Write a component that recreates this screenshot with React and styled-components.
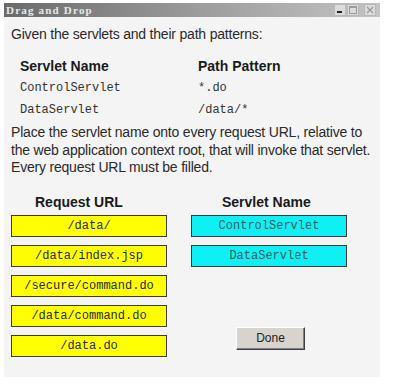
import React from "react";
import styled, { createGlobalStyle } from "styled-components";

const GlobalStyle = createGlobalStyle`
  body {
    margin: 0;
    background: #ffffff;
    font-family: "Liberation Sans", Arial, sans-serif;
  }
`;

const Window = styled.div`
  margin: 3px 0 0 4px;
  width: 376px;
  height: 374px;
  background: #f4f4f4;
  display: flex;
  flex-direction: column;
`;

const TitleBar = styled.div`
  height: 14px;
  display: flex;
  align-items: center;
  justify-content: space-between;
  padding: 0 4px 0 2px;
  background: linear-gradient(to right, #6a6a6a, #9a9a9a 50%, #c4c4c4);
`;

const Title = styled.span`
  font-family: "Liberation Serif", "Times New Roman", serif;
  font-weight: bold;
  font-size: 11px;
  letter-spacing: 1.2px;
  color: #e8e8e8;
`;

const Controls = styled.div`
  display: flex;
  gap: 1px;
`;

const Ctrl = styled.div`
  width: 10px;
  height: 10px;
  margin-left: ${(p) => (p.$gap ? "4px" : "0")};
  background: #dcdcdc;
  border: 1px solid #b8b8b8;
  display: flex;
  align-items: center;
  justify-content: center;
`;

const Body = styled.div`
  padding: 9px 0 0 7px;
  display: flex;
  flex-direction: column;
`;

const Text = styled.p`
  margin: 0;
  font-size: 14px;
  line-height: ${(p) => p.$lh || "17px"};
  color: #2a2a2a;
  letter-spacing: -0.2px;
`;

const Table = styled.div`
  margin: 12px 0 0 9px;
  display: grid;
  grid-template-columns: 178px 1fr;
  grid-auto-rows: 22px;
  align-items: center;
`;

const Th = styled.div`
  font-weight: bold;
  font-size: 14px;
  color: #1a1a1a;
`;

const Td = styled.div`
  font-family: "Liberation Mono", "Courier New", monospace;
  font-size: 12px;
  color: #333;
`;

const Para = styled.div`
  margin-top: 3px;
`;

const Columns = styled.div`
  margin: 17px 0 0 0;
  display: flex;
  gap: 24px;
`;

const Column = styled.div`
  width: 156px;
  display: flex;
  flex-direction: column;
  gap: 8px;
`;

const ColHead = styled.div`
  font-weight: bold;
  font-size: 14px;
  line-height: 17px;
  color: #1a1a1a;
  padding-left: ${(p) => p.$indent}px;
  margin-bottom: -4px;
`;

const Slot = styled.div`
  height: 20px;
  border: 1px solid #3c3c3c;
  background: ${(p) => (p.$cyan ? "#0ff0f4" : "#ffff00")};
  color: ${(p) => (p.$cyan ? "#2f5f63" : "#2a2a2a")};
  font-family: "Liberation Mono", "Courier New", monospace;
  font-size: 12px;
  display: flex;
  align-items: center;
  justify-content: center;
`;

const Done = styled.button`
  margin: 52px 0 0 45px;
  width: 69px;
  height: 23px;
  background: #d6d4cc;
  border: 1px solid;
  border-color: #ffffff #404040 #404040 #ffffff;
  box-shadow: inset -1px -1px 0 #808080;
  font-family: "Liberation Sans", Arial, sans-serif;
  font-size: 12px;
  color: #222;
  padding: 0;
`;

const urls = ["/data/", "/data/index.jsp", "/secure/command.do", "/data/command.do", "/data.do"];
const servlets = ["ControlServlet", "DataServlet"];

export default function App() {
  return (
    <>
      <GlobalStyle />
      <Window>
        <TitleBar>
          <Title>Drag and Drop</Title>
          <Controls>
            <Ctrl>
              <svg width="8" height="8" viewBox="0 0 8 8">
                <rect x="1" y="5" width="5" height="2" fill="#222" />
              </svg>
            </Ctrl>
            <Ctrl>
              <svg width="8" height="8" viewBox="0 0 8 8">
                <rect x="0.5" y="0.5" width="7" height="7" fill="none" stroke="#999" />
                <rect x="0.5" y="0.5" width="7" height="1.5" fill="#999" />
              </svg>
            </Ctrl>
            <Ctrl $gap>
              <svg width="8" height="8" viewBox="0 0 8 8">
                <path d="M1 1 L7 7 M7 1 L1 7" stroke="#999" strokeWidth="1.3" />
              </svg>
            </Ctrl>
          </Controls>
        </TitleBar>
        <Body>
          <Text>Given the servlets and their path patterns:</Text>
          <Table>
            <Th>Servlet Name</Th>
            <Th>Path Pattern</Th>
            <Td>ControlServlet</Td>
            <Td>*.do</Td>
            <Td>DataServlet</Td>
            <Td>/data/*</Td>
          </Table>
          <Para>
            <Text $lh="17.5px">
              Place the servlet name onto every request URL, relative to
              <br />
              the web application context root, that will invoke that servlet.
              <br />
              Every request URL must be filled.
            </Text>
          </Para>
          <Columns>
            <Column>
              <ColHead $indent={24}>Request URL</ColHead>
              {urls.map((u) => (
                <Slot key={u}>{u}</Slot>
              ))}
            </Column>
            <Column>
              <ColHead $indent={31}>Servlet Name</ColHead>
              {servlets.map((s) => (
                <Slot key={s} $cyan>
                  {s}
                </Slot>
              ))}
              <Done>Done</Done>
            </Column>
          </Columns>
        </Body>
      </Window>
    </>
  );
}
